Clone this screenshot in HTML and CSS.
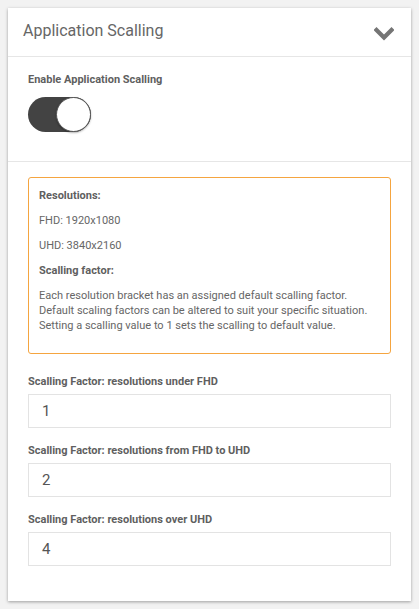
FILE: index.html
```html
<!DOCTYPE html>
<html>
<head>
<meta charset="utf-8">
<link rel="stylesheet" href="styles.css">
</head>
<body>
<div class="card">
  <div class="card-header">
    <h2 class="title">Application Scalling</h2>
    <svg class="chevron" width="20" height="14" viewBox="0 0 20 14"><path d="M2.5 3 L10 10.5 L17.5 3" fill="none" stroke="#757575" stroke-width="4.2" stroke-linecap="square"/></svg>
  </div>
  <div class="section">
    <div class="label">Enable Application Scalling</div>
    <div class="toggle"><div class="knob"></div></div>
  </div>
  <div class="section section-body">
    <div class="info">
      <p class="strong">Resolutions:</p>
      <p>FHD: 1920x1080</p>
      <p>UHD: 3840x2160</p>
      <p class="strong">Scalling factor:</p>
      <p>Each resolution bracket has an assigned default scalling factor. Default scaling factors can be altered to suit your specific situation. Setting a scalling value to 1 sets the scalling to default value.</p>
    </div>
    <div class="field">
      <div class="label">Scalling Factor: resolutions under FHD</div>
      <div class="input">1</div>
    </div>
    <div class="field">
      <div class="label">Scalling Factor: resolutions from FHD to UHD</div>
      <div class="input">2</div>
    </div>
    <div class="field">
      <div class="label">Scalling Factor: resolutions over UHD</div>
      <div class="input">4</div>
    </div>
  </div>
</div>
</body>
</html>
```
FILE: styles.css
```css
html, body {
  margin: 0;
  padding: 0;
}
body {
  background: #f2f2f2;
  font-family: Roboto, "Liberation Sans", sans-serif;
  padding: 8px;
  width: 403px;
}
.card {
  background: #fff;
  height: 593px;
  box-shadow: 0 1px 3px rgba(0,0,0,0.35);
  box-sizing: border-box;
}
.card-header {
  height: 49px;
  border-bottom: 1px solid #e6e6e6;
  box-sizing: border-box;
  display: flex;
  align-items: center;
  justify-content: space-between;
  padding: 0 17px 0 15px;
}
.title {
  margin: 0;
  font-size: 16px;
  font-weight: 400;
  color: #666;
  position: relative;
  top: -2px;
}
.chevron {
  display: block;
  position: relative;
  top: 2px;
}
.section {
  padding: 15px 20px 0 20px;
  height: 105px;
  border-bottom: 1px solid #e6e6e6;
  box-sizing: border-box;
}
.section-body {
  border-bottom: none;
  height: auto;
  padding: 15px 20px 20px 20px;
}
.label {
  font-size: 11px;
  font-weight: 700;
  color: #5f5f5f;
  line-height: 15px;
}
.toggle {
  margin-top: 10px;
  width: 63px;
  height: 35px;
  border-radius: 18px;
  background: #434343;
  position: relative;
}
.knob {
  position: absolute;
  right: 0;
  top: 0;
  width: 33px;
  height: 33px;
  border-radius: 50%;
  background: #fff;
  border: 1px solid #555;
  box-shadow: 0 1px 2px rgba(0,0,0,0.3);
}
.info {
  border: 1px solid #f5a540;
  border-radius: 3px;
  padding: 10px 10px 10px 10px;
  margin-bottom: 20px;
}
.info p {
  margin: 0 0 10px 0;
  font-size: 11px;
  line-height: 15px;
  color: #666;
}
.info p.strong {
  font-weight: 700;
  color: #5f5f5f;
}
.field {
  margin-bottom: 15px;
}
.input {
  margin-top: 5px;
  height: 34px;
  box-sizing: border-box;
  border: 1px solid #e3e3e3;
  padding: 0 13px;
  display: flex;
  align-items: center;
  font-size: 15px;
  color: #555;
}
```
